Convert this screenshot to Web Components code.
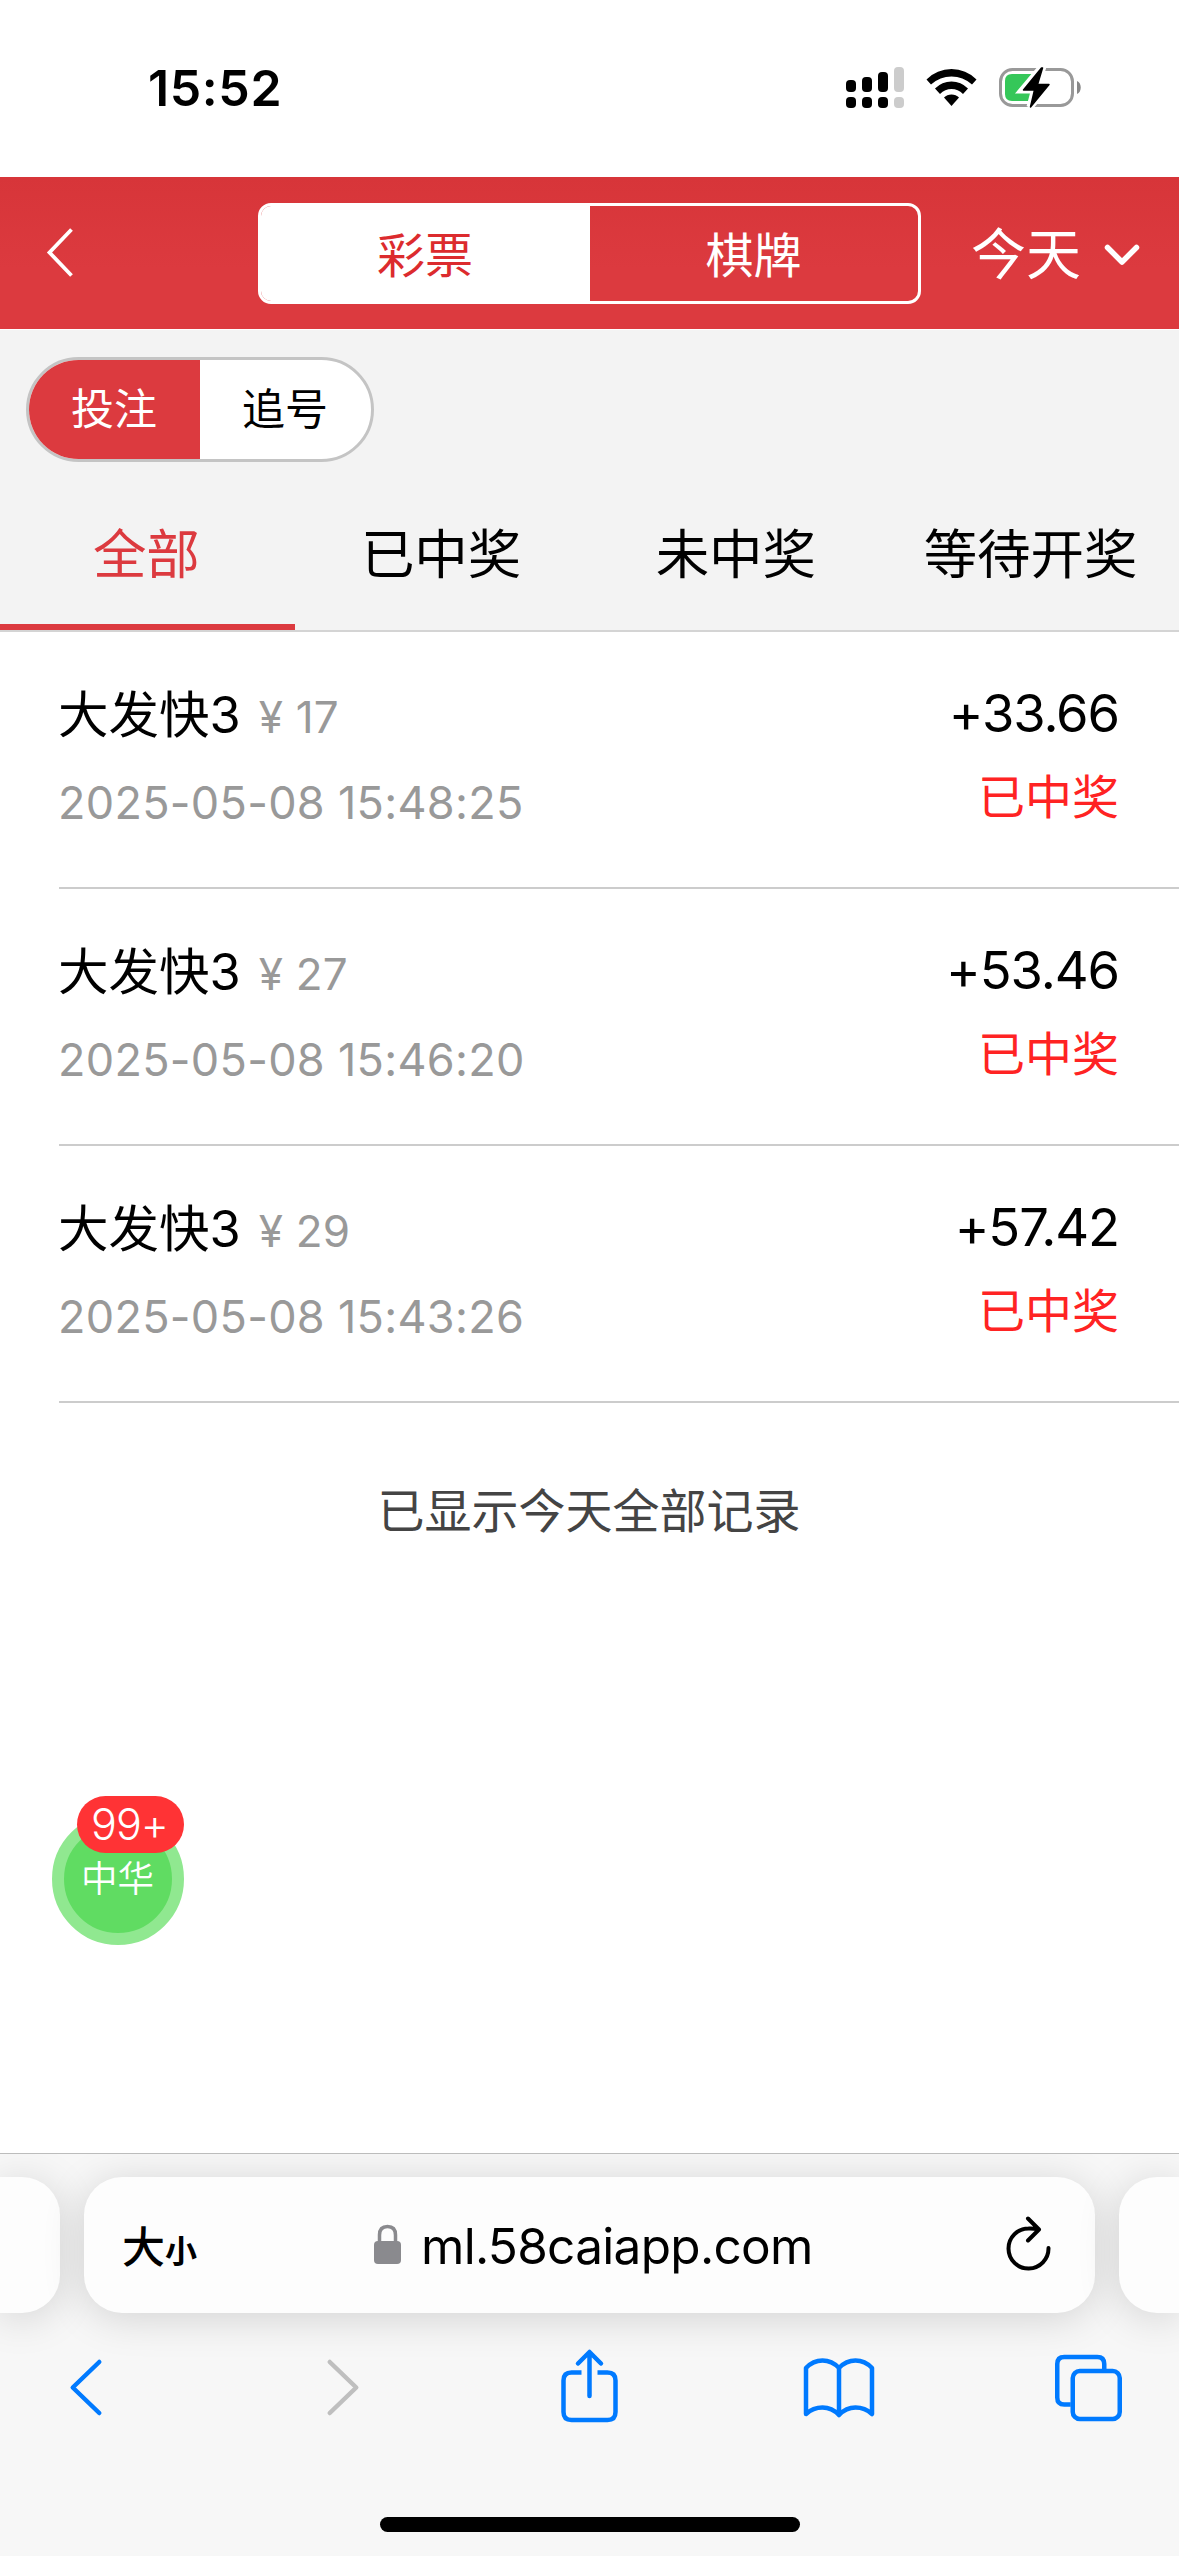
<!DOCTYPE html>
<html lang="zh-CN">
<head>
<meta charset="utf-8">
<title>投注记录</title>
<style>
  html, body { margin: 0; background: #fff; }
  body { width: 1179px; height: 2556px; overflow: hidden; font-family: Inter, "Noto Sans CJK SC", sans-serif; color: #000; }
</style>
</head>
<body>
<lottery-page></lottery-page>
<script>
const define = (name, html) => {
  const t = document.createElement('template');
  t.innerHTML = html;
  customElements.define(name, class extends HTMLElement {
    constructor() {
      super();
      this.attachShadow({ mode: 'open' }).append(t.content.cloneNode(true));
    }
  });
};

define('status-bar', `
<style>
  :host { display: flex; height: 177px; box-sizing: border-box; justify-content: space-between; align-items: flex-start; padding: 58px 96px 0 148px; }
  .time { font-size: 50px; font-weight: 600; line-height: 61px; letter-spacing: 0.6px; }
  .icons { display: flex; gap: 21px; padding-top: 7px; }
  svg { display: block; }
  .wifi { margin-right: 1px; }
</style>
<div class="time">15:52</div>
<div class="icons">
  <svg width="59" height="46" viewBox="0 0 59 46">
    <rect x="0" y="15" width="10" height="12" rx="4"/><rect x="16" y="12" width="10" height="15" rx="4"/><rect x="32" y="7" width="10" height="20" rx="4"/><rect x="48" y="2" width="10" height="25" rx="4" fill="#ccc"/>
    <rect x="0" y="32" width="10" height="11" rx="4"/><rect x="16" y="32" width="10" height="11" rx="4"/><rect x="32" y="32" width="10" height="11" rx="4"/><rect x="48" y="32" width="10" height="11" rx="4" fill="#ccc"/>
  </svg>
  <svg class="wifi" width="51" height="46" viewBox="0 0 51 46">
    <path d="M0.5 14.5Q11 4 25.500 4T50.500 14.500L46 19.500Q37 11.500 25.500 11.500T5 19.500Z"/>
    <path d="M9 23.500Q16 16.500 25.500 16.500T42 23.500L37 29Q32 24 25.500 24T14 29Z"/>
    <path d="M18 32.500Q21 29.500 25.500 29.500T33 32.500L25.500 41Z"/>
  </svg>
  <svg width="84" height="46" viewBox="0 0 84 46">
    <rect x="1.500" y="4.500" width="72" height="36" rx="12" fill="none" stroke="#999" stroke-width="3"/>
    <path d="M78 16C83 18 83 27 78 29Z" fill="#888"/>
    <path d="M13 9H36V36H13Q6 36 6 29V16Q6 9 13 9Z" fill="#35c759"/>
    <path d="M42 3L23.500 25H35.500L31 42L50.500 19.500H38.500L43.500 3Z" stroke="#fff" stroke-width="7" fill="#fff"/>
    <path d="M42.500 3L24.500 25H35.500L31.500 42L50 19.500H38.500L43.500 3Z" stroke="#000" stroke-width="1.500" stroke-linejoin="round"/>
  </svg>
</div>`);

define('nav-header', `
<style>
  :host { display: flex; height: 152px; box-sizing: border-box; align-items: flex-start; background: linear-gradient(#d73539, #dc3a3f 60%); color: #fff; }
  .back { display: block; width: 30px; margin: 50px 183px 0 45px; }
  .seg { display: flex; width: 663px; height: 101px; box-sizing: border-box; border: 3px solid #fff; border-radius: 13px; margin-top: 26px; overflow: hidden; }
  .seg span { flex: 1; text-align: center; font-size: 48px; line-height: 99px; text-indent: -1px; }
  .seg .on { flex: 0 0 329px; background: #fff; color: #dc2b2e; }
  .day { font-size: 55px; line-height: 80px; margin: 37px 0 0 50px; }
  .down { display: block; margin: 64px 0 0 21px; }
</style>
<svg class="back" width="30" height="52" viewBox="0 0 30 52"><path d="M26.500 2.500L4.500 25.500L26.500 48.500" fill="none" stroke="#fff" stroke-width="3.800"/></svg>
<div class="seg"><span class="on">彩票</span><span>棋牌</span></div>
<span class="day">今天</span>
<svg class="down" width="40" height="30" viewBox="0 0 40 30"><path d="M5.500 6.500L20 21L34.500 6.500" fill="none" stroke="#fff" stroke-width="5.500" stroke-linecap="round" stroke-linejoin="round"/></svg>`);

define('bet-toggle', `
<style>
  :host { display: flex; width: 348px; height: 105px; box-sizing: border-box; border: 3px solid #c4c4c4; border-radius: 53px; overflow: hidden; background: #fff; }
  span { flex: 1; text-align: center; font-size: 43px; line-height: 99px; text-indent: -1px; }
  .on { background: #dc3a3f; color: #fff; }
</style>
<span class="on">投注</span><span>追号</span>`);

define('filter-tabs', `
<style>
  :host { display: flex; height: 138px; border-bottom: 2px solid #d4d4d4; }
  span { flex: 1 1 0; min-width: 0; box-sizing: border-box; text-align: center; font-size: 53.500px; line-height: 125px; white-space: nowrap; text-indent: -2px; }
  .on { color: #dc3a3f; border-bottom: 6px solid #dc3a3f; }
</style>
<span class="on">全部</span><span>已中奖</span><span>未中奖</span><span>等待开奖</span>`);

define('bet-record', `
<style>
  :host { display: flex; justify-content: space-between; height: 257px; box-sizing: border-box; margin-left: 59px; padding-right: 60px; border-bottom: 2px solid #ccc; line-height: 80px; }
  .left { padding-top: 43px; }
  .right { padding-top: 41px; text-align: right; }
  .title { display: flex; height: 80px; align-items: baseline; gap: 19px; font-size: 50.500px; text-indent: -1px; }
  .stake { font-size: 44px; color: #999; letter-spacing: 0.2px; }
  .date { font-size: 45px; color: #999; margin-top: 8px; letter-spacing: 0.3px; text-indent: -1px; }
  .win { font-size: 52.500px; letter-spacing: -1.1px; }
  .state { font-size: 47px; color: #ff2323; margin-top: 4px; }
</style>
<div class="left">
  <div class="title"><span><slot name="name"></slot></span><span class="stake"><slot name="stake"></slot></span></div>
  <div class="date"><slot name="date"></slot></div>
</div>
<div class="right">
  <div class="win"><slot name="win"></slot></div>
  <div class="state"><slot name="state"></slot></div>
</div>`);

define('chat-bubble', `
<style>
  :host { position: absolute; left: 52px; top: 1796px; width: 132px; height: 149px; display: flex; align-items: flex-end; }
  .ball { width: 132px; height: 132px; box-sizing: border-box; border: 12px solid #90e890; border-radius: 50%; background: #60dc62; color: #fff; text-align: center; font-size: 36.500px; line-height: 109px; font-weight: 350; text-indent: -1px; }
  .count { position: absolute; right: 0; top: 0; width: 107px; height: 57px; border-radius: 29px; background: #ff3335; color: #fff; text-align: center; font-size: 43px; font-weight: 300; line-height: 57px; letter-spacing: -1px; text-indent: -2px; }
</style>
<div class="ball">中华</div><div class="count">99+</div>`);

define('browser-chrome', `
<style>
  :host { display: flex; flex-direction: column; height: 403px; box-sizing: border-box; border-top: 1px solid #bcbcbc; background: #f7f7f7; overflow: hidden; }
  .bars { display: flex; justify-content: space-between; gap: 24px; padding-top: 23px; }
  .card { height: 136px; background: #fdfdfd; border-radius: 38px; box-shadow: 0 5px 42px rgba(0,0,0,.15); }
  .edge { flex: 0 0 60px; }
  .edge.l { border-radius: 0 38px 38px 0; }
  .edge.r { border-radius: 38px 0 0 38px; }
  .url { flex: 1; display: flex; align-items: flex-start; }
  .size { width: 250px; margin: 40px 0 0 38px; line-height: 60px; font-size: 43px; font-weight: 500; }
  .size small { font-size: 32px; font-weight: 700; }
  .lock { display: block; margin: 47px 19px 0 2px; }
  .host { width: 562px; margin-top: 38px; font-size: 49.500px; line-height: 62px; letter-spacing: -0.7px; }
  .reload { display: block; margin: 36px 0 0 21px; }
  .tools { display: flex; justify-content: space-between; padding: 30px 51px 0 52px; }
  .tools svg { display: block; }
  .home { width: 420px; height: 15px; border-radius: 8px; background: #000; margin: 86px auto 0; }
  .ln { fill: none; stroke: #007aff; stroke-width: 4.500; stroke-linecap: round; stroke-linejoin: round; }
</style>
<div class="bars">
  <div class="card edge l"></div>
  <div class="card url">
    <div class="size">大<small>小</small></div>
    <svg class="lock" width="28" height="42" viewBox="0 0 28 42"><rect x="0" y="17" width="27" height="23" rx="4" fill="#8a8a8e"/><path d="M5.500 18V11Q5.500 2.500 13.500 2.500T21.500 11V18" fill="none" stroke="#8a8a8e" stroke-width="3.500"/></svg>
    <div class="host">ml.58caiapp.com</div>
    <svg class="reload" width="50" height="62" viewBox="0 0 50 62"><path d="M44.500 35A20 20 0 1 1 24.500 15.500Q29 15.200 34.500 16.500M24 5.500L35 16.500L24 27.500" fill="none" stroke="#000" stroke-width="4" stroke-linecap="round" stroke-linejoin="round"/></svg>
  </div>
  <div class="card edge r"></div>
</div>
<div class="tools">
  <svg width="80" height="88" viewBox="-13.250 0 80 88"><path class="ln" d="M34 19L7.500 44.500L34 70"/></svg>
  <svg width="80" height="88" viewBox="-22.750 0 80 88"><path class="ln" style="stroke:#bfbfbf" d="M6 19L32.500 44.500L6 70"/></svg>
  <svg width="80" height="88" viewBox="-7.500 0 80 88"><path class="ln" style="stroke-linecap:butt" d="M24 29.500H14Q6 29.500 6 37.500V69Q6 77 14 77H50Q58 77 58 69V37.500Q58 29.500 50 29.500H40"/><path class="ln" d="M32 53V10M20.500 20.500L32 9L43.500 20.500"/></svg>
  <svg width="80" height="88" viewBox="-2 0 80 88"><path class="ln" d="M38 25Q31 17.500 21.500 17.500T5 25V71Q12 64.500 21.500 64.500T38 72Q45 64.500 54.500 64.500T71 71V25Q64 17.500 54.500 17.500T38 25V72"/></svg>
  <svg width="80" height="88" viewBox="-1.750 0 80 88"><rect class="ln" x="23" y="28" width="47" height="48" rx="7"/><path class="ln" style="stroke-linecap:butt" d="M54.500 26V21Q54.500 14 47.500 14H14.500Q7.500 14 7.500 21V54.500Q7.500 61.500 14.500 61.500H21"/></svg>
</div>
<div class="home"></div>`);

define('lottery-page', `
<style>
  :host { display: flex; flex-direction: column; height: 2556px; position: relative; }
  .filters { background: #f3f3f3; padding-top: 27px; border-top: 1px solid #fff; }
  .filters bet-toggle { margin: 0 0 30px 26px; }
  main { flex: 1; background: #fff; }
  .end { text-align: center; font-size: 47px; line-height: 60px; color: #444; padding-top: 78px; text-indent: -1px; }
</style>
<status-bar></status-bar>
<nav-header></nav-header>
<div class="filters"><bet-toggle></bet-toggle><filter-tabs></filter-tabs></div>
<main>
  <bet-record><span slot="name">大发快3</span><span slot="stake">¥ 17</span><span slot="date">2025-05-08 15:48:25</span><span slot="win">+33.66</span><span slot="state">已中奖</span></bet-record>
  <bet-record><span slot="name">大发快3</span><span slot="stake">¥ 27</span><span slot="date">2025-05-08 15:46:20</span><span slot="win">+53.46</span><span slot="state">已中奖</span></bet-record>
  <bet-record><span slot="name">大发快3</span><span slot="stake">¥ 29</span><span slot="date">2025-05-08 15:43:26</span><span slot="win">+57.42</span><span slot="state">已中奖</span></bet-record>
  <div class="end">已显示今天全部记录</div>
</main>
<chat-bubble></chat-bubble>
<browser-chrome></browser-chrome>`);
</script>
</body>
</html>
